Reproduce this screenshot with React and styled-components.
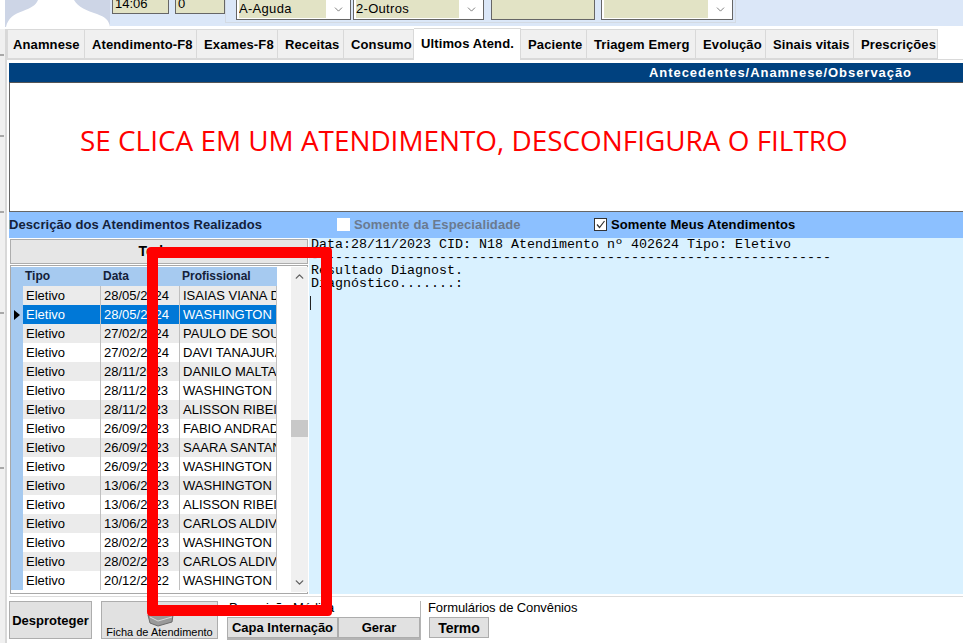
import React from 'react';
import styled, { createGlobalStyle } from 'styled-components';
import { ChevronDown, ChevronUp } from 'lucide-react';

const GlobalStyle = createGlobalStyle`
  html, body { margin: 0; padding: 0; background: #fff; }
  * { box-sizing: border-box; }
`;

const Page = styled.div`
  position: relative;
  width: 963px;
  height: 643px;
  overflow: hidden;
  background: #fff;
  color: #000;
  font-family: "Liberation Sans", Arial, sans-serif;
  font-size: 13px;
`;

const Header = styled.div`
  display: flex;
  height: 26px;
  padding-left: 5px;
`;

const Avatar = styled.svg`
  width: 105px;
  height: 27px;
  flex: none;
`;

const HeaderFields = styled.div`
  flex: 1;
  display: flex;
  align-items: flex-start;
  background: #dbe7f8;
  padding-left: 2px;
`;

const TopField = styled.div`
  width: ${(p) => p.$w}px;
  height: ${(p) => p.$h || 14}px;
  margin-left: ${(p) => p.$ml || 0}px;
  flex: none;
  display: flex;
  align-items: flex-end;
  padding: 0 0 3px 2px;
  line-height: 13px;
  overflow: hidden;
  background: #e2e3c5;
  border: 1px solid #666;
  border-top: 0;
`;

const SelectGroup = styled.div`
  display: flex;
  align-items: flex-start;
  width: 511px;
  height: 23px;
  padding-left: 10px;
  border: 1px solid #d3dae3;
  border-top: 0;
`;

const Select = styled.div`
  width: ${(p) => p.$w}px;
  height: 20px;
  margin-left: ${(p) => p.$ml || 0}px;
  flex: none;
  display: flex;
  align-items: flex-start;
  padding: 0 5px 0 2px;
  background: #fff;
  border: 1px solid #666;
  border-top: 0;
  color: #444;
`;

const SelectValue = styled.div`
  flex: 1;
  height: 18px;
  margin-right: 6px;
  padding-top: 2px;
  background: #e2e3c5;
  color: #000;
  line-height: 14px;
  letter-spacing: 0.3px;
  overflow: hidden;
`;

const SelectArrow = styled(ChevronDown)`
  margin-top: 3px;
  flex: none;
`;

const Body = styled.div`
  display: flex;
  height: 617px;
`;

const Rail = styled.div`
  width: 7px;
  flex: none;
  display: flex;
  flex-direction: column;
  margin-top: 3px;
  background: linear-gradient(to right, #f0f0f0 5px, #d8d8d8 5px);
`;

const RailTick = styled.div`
  width: 4px;
  height: 2px;
  margin-top: ${(p) => p.$mt}px;
  background: #a8a8a8;
`;

const Main = styled.div`
  flex: 1;
  min-width: 0;
  display: flex;
  flex-direction: column;
`;

const TabBar = styled.div`
  display: flex;
  align-items: flex-end;
  height: 33px;
  margin-top: 1px;
  border-bottom: 1px solid #d9d9d9;
`;

const Tab = styled.div`
  width: ${(p) => p.$w}px;
  height: ${(p) => (p.$active ? 32 : 30)}px;
  flex: none;
  display: flex;
  align-items: center;
  margin-bottom: ${(p) => (p.$active ? -1 : 0)}px;
  padding-bottom: ${(p) => (p.$active ? 3 : 0)}px;
  padding-left: ${(p) => (p.$first ? 5 : 7)}px;
  background: ${(p) => (p.$active ? '#fff' : '#f0f0f0')};
  border: 1px solid #d9d9d9;
  border-left-width: ${(p) => (p.$first ? 1 : 0)}px;
  border-bottom-width: ${(p) => (p.$active ? 0 : 1)}px;
  font-weight: bold;
  letter-spacing: 0.12px;
  white-space: nowrap;
`;

const Content = styled.div`
  padding: 3px 0 0 2px;
  display: flex;
  flex-direction: column;
`;

const SectionBar = styled.div`
  height: 20px;
  padding-right: 51px;
  background: #00417f;
  border-bottom: 1px solid #555;
  color: #fff;
  font-weight: bold;
  line-height: 19px;
  text-align: right;
  letter-spacing: 0.95px;
`;

const NotePanel = styled.div`
  height: 129px;
  display: flex;
  align-items: center;
  padding: 0 0 14px 70px;
  background: #fff;
  border-left: 1px solid #666;
  border-bottom: 1px solid #666;
  color: #f00;
  font-family: "Open Sans", sans-serif;
  font-size: 27.9px;
  white-space: nowrap;
`;

const FilterBar = styled.div`
  height: 26px;
  display: flex;
  align-items: center;
  padding-bottom: 2px;
  background: #8cc0ff;
  font-weight: bold;
`;

const FilterTitle = styled.div`
  width: 328px;
  letter-spacing: 0.08px;
  color: #14213a;
`;

const FilterOption = styled.div`
  width: ${(p) => p.$w}px;
  display: flex;
  align-items: center;
  gap: 4px;
  color: ${(p) => (p.$disabled ? '#6a7a90' : '#000')};
  letter-spacing: 0.11px;
`;

const CheckBox = styled.span`
  width: 13px;
  height: 13px;
  flex: none;
  display: flex;
  background: #fff;
  border: ${(p) => (p.$disabled ? '0' : '1px solid #333')};
`;

const WorkArea = styled.div`
  display: flex;
  height: 356px;
`;

const ListColumn = styled.div`
  width: 300px;
  flex: none;
  padding: 1px 1px 0 1px;
  display: flex;
  flex-direction: column;
`;

const AllButton = styled.div`
  height: 25px;
  flex: none;
  background: #e6e6e6;
  border: 1px solid #adadad;
  font-size: 14px;
  font-weight: bold;
  line-height: 23px;
  text-align: center;
`;

const GridFrame = styled.div`
  height: 329px;
  margin-top: 1px;
  padding: 1px 0;
  display: flex;
  background: #fff;
  border: 1px solid #a8a8a8;
`;

const GridTable = styled.div`
  width: 266px;
  flex: none;
  display: flex;
  flex-direction: column;
`;

const GridHeader = styled.div`
  display: grid;
  grid-template-columns: 12px 78px 79px 97px;
  height: 19px;
  flex: none;
  background: #a6caf0;
  font-size: 12px;
  font-weight: bold;
  line-height: 19px;
  color: #14213a;
`;

const HeaderCell = styled.div`
  padding-left: 2px;
`;

const GridRow = styled.div`
  display: grid;
  grid-template-columns: 12px 78px 79px 97px;
  height: 19px;
  flex: none;
  line-height: 20px;
  color: ${(p) => (p.$selected ? '#fff' : '#000')};
  background: ${(p) => (p.$selected ? '#0078d7' : p.$odd ? '#ebebeb' : '#fff')};
`;

const RowMarker = styled.div`
  display: flex;
  align-items: center;
  justify-content: center;
  background: #a6caf0;
`;

const MarkerArrow = styled.span`
  width: 0;
  height: 0;
  border-left: 6px solid #000;
  border-top: 5px solid transparent;
  border-bottom: 5px solid transparent;
`;

const Cell = styled.div`
  padding-left: 3px;
  overflow: hidden;
  white-space: nowrap;
  border-right: 1px solid #c0c0c0;
`;

const ScrollGap = styled.div`
  width: 14px;
  flex: none;
`;

const ScrollBar = styled.div`
  width: 17px;
  flex: none;
  display: flex;
  flex-direction: column;
  align-items: center;
  justify-content: space-between;
  padding: 3px 0;
  background: #f0f0f0;
  color: #606060;
`;

const ScrollThumb = styled.div`
  width: 100%;
  height: 17px;
  margin-top: 133px;
  margin-bottom: 135px;
  background: #c8c8c8;
`;

const MemoText = styled.div`
  flex: 1;
  min-width: 0;
  padding: 0 0 0 2px;
  background: #d9f1ff;
  font-family: "Liberation Mono", "Courier New", monospace;
  font-size: 13.33px;
  line-height: 13px;
  white-space: pre;
`;

const Caret = styled.div`
  width: 1px;
  height: 14px;
  margin: 6px 0 0 -1px;
  background: #222;
`;

const Footer = styled.div`
  flex: 1;
  display: flex;
  align-items: flex-start;
  padding: 4px 0 0 0;
  margin-top: 2px;
  border-top: 1px solid #dcdcdc;
`;

const GrayButton = styled.div`
  height: ${(p) => p.$h}px;
  width: ${(p) => p.$w}px;
  margin-left: ${(p) => p.$ml || 0}px;
  flex: none;
  display: flex;
  flex-direction: ${(p) => (p.$stack ? 'column' : 'row')};
  align-items: center;
  justify-content: ${(p) => (p.$stack ? 'flex-end' : 'center')};
  background: #e1e1e1;
  border: 1px solid #adadad;
  font-size: ${(p) => p.$size || 13}px;
  font-weight: ${(p) => (p.$plain ? 'normal' : 'bold')};
  line-height: ${(p) => (p.$stack ? '11px' : 'normal')};
  white-space: nowrap;
`;

const PrinterIcon = styled.svg`
  width: 28px;
  height: 22px;
  flex: none;
`;

const FormGroup = styled.div`
  width: ${(p) => p.$w}px;
  height: 39px;
  margin-left: ${(p) => p.$ml}px;
  flex: none;
  display: flex;
  flex-direction: column;
  border-right: ${(p) => (p.$boxed ? '1px solid #b4b4b4' : '0')};
  border-bottom: ${(p) => (p.$boxed ? '2px solid #b4b4b4' : '0')};
`;

const FormLabel = styled.div`
  height: 16px;
  margin-left: ${(p) => p.$ml || 0}px;
  font-size: 13px;
  letter-spacing: -0.1px;
  line-height: 13px;
  white-space: nowrap;
`;

const ButtonRow = styled.div`
  display: flex;
`;

const AnnotationFrame = styled.div`
  position: absolute;
  left: 147px;
  top: 247px;
  width: 185px;
  height: 369px;
  border: 11px solid #f00;
  border-radius: 4px;
`;

const tabs = [
  ['Anamnese', 78],
  ['Atendimento-F8', 112],
  ['Exames-F8', 81],
  ['Receitas', 66],
  ['Consumo', 70],
  ['Ultimos Atend.', 107],
  ['Paciente', 66],
  ['Triagem Emerg', 109],
  ['Evolução', 70],
  ['Sinais vitais', 88],
  ['Prescrições', 84],
];

const visits = [
  ['28/05/2024', 'ISAIAS VIANA DE'],
  ['28/05/2024', 'WASHINGTON L'],
  ['27/02/2024', 'PAULO DE SOUZA'],
  ['27/02/2024', 'DAVI TANAJURA'],
  ['28/11/2023', 'DANILO MALTA'],
  ['28/11/2023', 'WASHINGTON L'],
  ['28/11/2023', 'ALISSON RIBEIRO'],
  ['26/09/2023', 'FABIO ANDRADE'],
  ['26/09/2023', 'SAARA SANTANA'],
  ['26/09/2023', 'WASHINGTON L'],
  ['13/06/2023', 'WASHINGTON L'],
  ['13/06/2023', 'ALISSON RIBEIRO'],
  ['13/06/2023', 'CARLOS ALDIVAN'],
  ['28/02/2023', 'WASHINGTON L'],
  ['28/02/2023', 'CARLOS ALDIVAN'],
  ['20/12/2022', 'WASHINGTON L'],
];

const memo = `Data:28/11/2023 CID: N18 Atendimento nº 402624 Tipo: Eletivo
${'-'.repeat(65)}
Resultado Diagnost.
Diagnóstico.......:
`;

export default function App() {
  return (
    <Page>
      <GlobalStyle />
      <Header>
        <Avatar viewBox="0 0 105 27">
          <rect width="105" height="27" fill="#cdd5e6" />
          <path d="M33 0 C31 5 26 8 18 11 C9 14 3 18 1 27 L105 27 C104 20 100 17 92 14 C82 11 73 7 69 0 Z" fill="#fff" />
        </Avatar>
        <HeaderFields>
          <TopField $w={57}>14:06</TopField>
          <TopField $w={50} $ml={6}>0</TopField>
          <SelectGroup>
            <Select $w={115}>
              <SelectValue>A-Aguda</SelectValue>
              <SelectArrow size={13} strokeWidth={1.25} />
            </Select>
            <Select $w={131} $ml={2}>
              <SelectValue>2-Outros</SelectValue>
              <SelectArrow size={13} strokeWidth={1.25} />
            </Select>
            <TopField $w={104} $h={20} $ml={7} />
            <Select $w={132} $ml={6}>
              <SelectValue />
              <SelectArrow size={13} strokeWidth={1.25} />
            </Select>
          </SelectGroup>
        </HeaderFields>
      </Header>
      <Body>
        <Rail>
          <RailTick $mt={25} />
          <RailTick $mt={79} />
          <RailTick $mt={74} />
          <RailTick $mt={99} />
          <RailTick $mt={153} />
        </Rail>
        <Main>
          <TabBar>
            {tabs.map(([label, width], i) => (
              <Tab key={label} $w={width} $first={i === 0} $active={i === 5}>
                {label}
              </Tab>
            ))}
          </TabBar>
          <Content>
            <SectionBar>Antecedentes/Anamnese/Observação</SectionBar>
            <NotePanel>SE CLICA EM UM ATENDIMENTO, DESCONFIGURA O FILTRO</NotePanel>
            <FilterBar>
              <FilterTitle>Descrição dos Atendimentos Realizados</FilterTitle>
              <FilterOption $w={257} $disabled>
                <CheckBox $disabled />
                Somente da Especialidade
              </FilterOption>
              <FilterOption $w={220}>
                <CheckBox>
                  <svg viewBox="0 0 11 11" width="11" height="11">
                    <path d="M2 5.5 L4.5 8.5 L9.5 2" fill="none" stroke="#333" strokeWidth="1.2" />
                  </svg>
                </CheckBox>
                Somente Meus Atendimentos
              </FilterOption>
            </FilterBar>
            <WorkArea>
              <ListColumn>
                <AllButton>Todos</AllButton>
                <GridFrame>
                  <GridTable>
                    <GridHeader>
                      <span />
                      <HeaderCell>Tipo</HeaderCell>
                      <HeaderCell>Data</HeaderCell>
                      <HeaderCell>Profissional</HeaderCell>
                    </GridHeader>
                    {visits.map(([date, name], i) => (
                      <GridRow key={i} $odd={i % 2 === 0} $selected={i === 1}>
                        <RowMarker>{i === 1 && <MarkerArrow />}</RowMarker>
                        <Cell>Eletivo</Cell>
                        <Cell>{date}</Cell>
                        <Cell>{name}</Cell>
                      </GridRow>
                    ))}
                  </GridTable>
                  <ScrollGap />
                  <ScrollBar>
                    <ChevronUp size={13} strokeWidth={2.5} />
                    <ScrollThumb />
                    <ChevronDown size={13} strokeWidth={2.5} />
                  </ScrollBar>
                </GridFrame>
              </ListColumn>
              <MemoText>
                {memo}
                <Caret />
              </MemoText>
            </WorkArea>
            <Footer>
              <GrayButton $w={83} $h={38}>Desproteger</GrayButton>
              <GrayButton $w={117} $h={38} $ml={9} $stack $plain $size={11}>
                <PrinterIcon viewBox="0 0 28 22">
                  <path d="M5 9 L10 1 L22 1 L24 8 Z" fill="#efefef" stroke="#8a8a8a" />
                  <path d="M2 10 L22 7 L27 10 L26 17 L12 21 L4 18 Z" fill="#9a9a9a" stroke="#6b6b6b" />
                  <path d="M4 12 L12 16 L26 12" fill="none" stroke="#d8d8d8" />
                </PrinterIcon>
                Ficha de Atendimento
              </GrayButton>
              <FormGroup $w={194} $ml={9} $boxed>
                <FormLabel $ml={2}>Prescrição Médica</FormLabel>
                <ButtonRow>
                  <GrayButton $w={111} $h={21}>Capa Internação</GrayButton>
                  <GrayButton $w={82} $h={21}>Gerar</GrayButton>
                </ButtonRow>
              </FormGroup>
              <FormGroup $w={200} $ml={7}>
                <FormLabel>Formulários de Convênios</FormLabel>
                <GrayButton $w={60} $h={21} $ml={1} $size={14}>Termo</GrayButton>
              </FormGroup>
            </Footer>
          </Content>
        </Main>
      </Body>
      <AnnotationFrame />
    </Page>
  );
}
